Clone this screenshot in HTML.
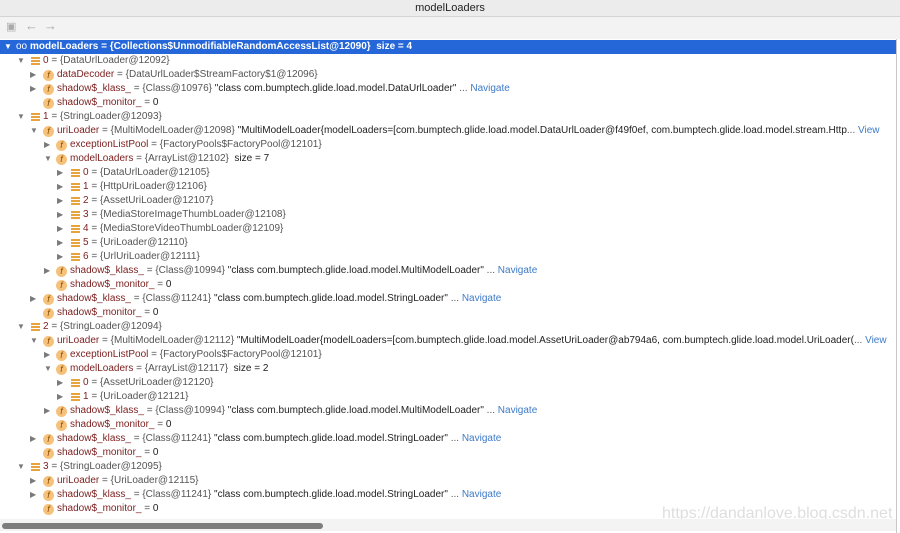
<!DOCTYPE html>
<html><head><meta charset="utf-8"><style>
*{margin:0;padding:0;box-sizing:border-box}
body{width:900px;height:533px;overflow:hidden;background:#fff;font-family:"Liberation Sans",sans-serif;font-size:10px;position:relative}
#title{position:absolute;left:0;top:0;width:900px;height:17px;background:#ececec;border-bottom:1px solid #d4d4d4;text-align:center;line-height:17px;font-size:11px;color:#222}
#tb{position:absolute;left:0;top:17px;width:900px;height:22px;background:#f3f3f3;color:#aaa;font-size:13px}
.r{position:absolute;left:0;width:896px;height:14px;line-height:14px;white-space:nowrap;color:#222;overflow:hidden}
.sel{background:#2567d8;color:#fff;font-weight:bold}
.a{position:absolute;top:0;font-size:8px;color:#7a7a7a}
.sel .a{color:#fff}
.f{position:absolute;top:2px;width:11px;height:11px;border-radius:50%;background:#f6c27b;color:#8a4d00;font-size:9px;line-height:11px;text-align:center;font-style:italic}
.l{position:absolute;top:3px;width:9px;height:8px;border-top:2px solid #e8a33d;border-bottom:2px solid #e8a33d}
.l:after{content:"";position:absolute;left:0;top:1px;width:9px;height:2px;background:#e8a33d}
.t{position:absolute;top:0}
.n{color:#7b1e1e}
.g{color:#555}
.nv{color:#3d7ac7}
#sb{position:absolute;left:0;top:519px;width:897px;height:12px;background:#f3f3f3}
#th{position:absolute;left:2px;top:523px;width:321px;height:6px;border-radius:3px;background:#7d7d7d}
#rb{position:absolute;left:896px;top:39px;width:1px;height:494px;background:#c8c8c8}
#wm{position:absolute;left:662px;top:505px;font-size:16px;color:#dedede}
</style></head><body>
<div id="title">modelLoaders</div>
<div id="tb"><span style="position:absolute;left:6px;top:3px;font-size:11px">▣</span><span style="position:absolute;left:25px;top:1px">←</span><span style="position:absolute;left:44px;top:1px">→</span></div>

<div class="r sel" style="top:40px"><span class="a" style="left:4px">▼</span><span class="t" style="left:16px;font-weight:normal">oo</span><span class="t" style="left:30px">modelLoaders = {Collections$UnmodifiableRandomAccessList@12090}&nbsp; size = 4</span></div>

<div class="r" style="top:54px"><span class="a" style="left:17px">▼</span><i class="l" style="left:31px"></i><span class="t" style="left:43px"><span class="n">0</span> <span class="g">= {DataUrlLoader@12092}</span></span></div>
<div class="r" style="top:68px"><span class="a" style="left:30px">▶</span><i class="f" style="left:43px">f</i><span class="t" style="left:57px"><span class="n">dataDecoder</span> <span class="g">= {DataUrlLoader$StreamFactory$1@12096}</span></span></div>
<div class="r" style="top:82px"><span class="a" style="left:30px">▶</span><i class="f" style="left:43px">f</i><span class="t" style="left:57px"><span class="n">shadow$_klass_</span> <span class="g">= {Class@10976}</span> "class com.bumptech.glide.load.model.DataUrlLoader" <span class="g">...</span> <span class="nv">Navigate</span></span></div>
<div class="r" style="top:96px"><i class="f" style="left:43px">f</i><span class="t" style="left:57px"><span class="n">shadow$_monitor_</span> <span class="g">=</span> 0</span></div>

<div class="r" style="top:110px"><span class="a" style="left:17px">▼</span><i class="l" style="left:31px"></i><span class="t" style="left:43px"><span class="n">1</span> <span class="g">= {StringLoader@12093}</span></span></div>
<div class="r" style="top:124px"><span class="a" style="left:30px">▼</span><i class="f" style="left:43px">f</i><span class="t" style="left:57px"><span class="n">uriLoader</span> <span class="g">= {MultiModelLoader@12098}</span> "MultiModelLoader{modelLoaders=[com.bumptech.glide.load.model.DataUrlLoader@f49f0ef, com.bumptech.glide.load.model.stream.Http<span class="g">...</span> <span class="nv">View</span></span></div>
<div class="r" style="top:138px"><span class="a" style="left:44px">▶</span><i class="f" style="left:56px">f</i><span class="t" style="left:70px"><span class="n">exceptionListPool</span> <span class="g">= {FactoryPools$FactoryPool@12101}</span></span></div>
<div class="r" style="top:152px"><span class="a" style="left:44px">▼</span><i class="f" style="left:56px">f</i><span class="t" style="left:70px"><span class="n">modelLoaders</span> <span class="g">= {ArrayList@12102}</span>&nbsp; size = 7</span></div>
<div class="r" style="top:166px"><span class="a" style="left:57px">▶</span><i class="l" style="left:71px"></i><span class="t" style="left:83px"><span class="n">0</span> <span class="g">= {DataUrlLoader@12105}</span></span></div>
<div class="r" style="top:180px"><span class="a" style="left:57px">▶</span><i class="l" style="left:71px"></i><span class="t" style="left:83px"><span class="n">1</span> <span class="g">= {HttpUriLoader@12106}</span></span></div>
<div class="r" style="top:194px"><span class="a" style="left:57px">▶</span><i class="l" style="left:71px"></i><span class="t" style="left:83px"><span class="n">2</span> <span class="g">= {AssetUriLoader@12107}</span></span></div>
<div class="r" style="top:208px"><span class="a" style="left:57px">▶</span><i class="l" style="left:71px"></i><span class="t" style="left:83px"><span class="n">3</span> <span class="g">= {MediaStoreImageThumbLoader@12108}</span></span></div>
<div class="r" style="top:222px"><span class="a" style="left:57px">▶</span><i class="l" style="left:71px"></i><span class="t" style="left:83px"><span class="n">4</span> <span class="g">= {MediaStoreVideoThumbLoader@12109}</span></span></div>
<div class="r" style="top:236px"><span class="a" style="left:57px">▶</span><i class="l" style="left:71px"></i><span class="t" style="left:83px"><span class="n">5</span> <span class="g">= {UriLoader@12110}</span></span></div>
<div class="r" style="top:250px"><span class="a" style="left:57px">▶</span><i class="l" style="left:71px"></i><span class="t" style="left:83px"><span class="n">6</span> <span class="g">= {UrlUriLoader@12111}</span></span></div>
<div class="r" style="top:264px"><span class="a" style="left:44px">▶</span><i class="f" style="left:56px">f</i><span class="t" style="left:70px"><span class="n">shadow$_klass_</span> <span class="g">= {Class@10994}</span> "class com.bumptech.glide.load.model.MultiModelLoader" <span class="g">...</span> <span class="nv">Navigate</span></span></div>
<div class="r" style="top:278px"><i class="f" style="left:56px">f</i><span class="t" style="left:70px"><span class="n">shadow$_monitor_</span> <span class="g">=</span> 0</span></div>
<div class="r" style="top:292px"><span class="a" style="left:30px">▶</span><i class="f" style="left:43px">f</i><span class="t" style="left:57px"><span class="n">shadow$_klass_</span> <span class="g">= {Class@11241}</span> "class com.bumptech.glide.load.model.StringLoader" <span class="g">...</span> <span class="nv">Navigate</span></span></div>
<div class="r" style="top:306px"><i class="f" style="left:43px">f</i><span class="t" style="left:57px"><span class="n">shadow$_monitor_</span> <span class="g">=</span> 0</span></div>

<div class="r" style="top:320px"><span class="a" style="left:17px">▼</span><i class="l" style="left:31px"></i><span class="t" style="left:43px"><span class="n">2</span> <span class="g">= {StringLoader@12094}</span></span></div>
<div class="r" style="top:334px"><span class="a" style="left:30px">▼</span><i class="f" style="left:43px">f</i><span class="t" style="left:57px"><span class="n">uriLoader</span> <span class="g">= {MultiModelLoader@12112}</span> "MultiModelLoader{modelLoaders=[com.bumptech.glide.load.model.AssetUriLoader@ab794a6, com.bumptech.glide.load.model.UriLoader(<span class="g">...</span> <span class="nv">View</span></span></div>
<div class="r" style="top:348px"><span class="a" style="left:44px">▶</span><i class="f" style="left:56px">f</i><span class="t" style="left:70px"><span class="n">exceptionListPool</span> <span class="g">= {FactoryPools$FactoryPool@12101}</span></span></div>
<div class="r" style="top:362px"><span class="a" style="left:44px">▼</span><i class="f" style="left:56px">f</i><span class="t" style="left:70px"><span class="n">modelLoaders</span> <span class="g">= {ArrayList@12117}</span>&nbsp; size = 2</span></div>
<div class="r" style="top:376px"><span class="a" style="left:57px">▶</span><i class="l" style="left:71px"></i><span class="t" style="left:83px"><span class="n">0</span> <span class="g">= {AssetUriLoader@12120}</span></span></div>
<div class="r" style="top:390px"><span class="a" style="left:57px">▶</span><i class="l" style="left:71px"></i><span class="t" style="left:83px"><span class="n">1</span> <span class="g">= {UriLoader@12121}</span></span></div>
<div class="r" style="top:404px"><span class="a" style="left:44px">▶</span><i class="f" style="left:56px">f</i><span class="t" style="left:70px"><span class="n">shadow$_klass_</span> <span class="g">= {Class@10994}</span> "class com.bumptech.glide.load.model.MultiModelLoader" <span class="g">...</span> <span class="nv">Navigate</span></span></div>
<div class="r" style="top:418px"><i class="f" style="left:56px">f</i><span class="t" style="left:70px"><span class="n">shadow$_monitor_</span> <span class="g">=</span> 0</span></div>
<div class="r" style="top:432px"><span class="a" style="left:30px">▶</span><i class="f" style="left:43px">f</i><span class="t" style="left:57px"><span class="n">shadow$_klass_</span> <span class="g">= {Class@11241}</span> "class com.bumptech.glide.load.model.StringLoader" <span class="g">...</span> <span class="nv">Navigate</span></span></div>
<div class="r" style="top:446px"><i class="f" style="left:43px">f</i><span class="t" style="left:57px"><span class="n">shadow$_monitor_</span> <span class="g">=</span> 0</span></div>

<div class="r" style="top:460px"><span class="a" style="left:17px">▼</span><i class="l" style="left:31px"></i><span class="t" style="left:43px"><span class="n">3</span> <span class="g">= {StringLoader@12095}</span></span></div>
<div class="r" style="top:474px"><span class="a" style="left:30px">▶</span><i class="f" style="left:43px">f</i><span class="t" style="left:57px"><span class="n">uriLoader</span> <span class="g">= {UriLoader@12115}</span></span></div>
<div class="r" style="top:488px"><span class="a" style="left:30px">▶</span><i class="f" style="left:43px">f</i><span class="t" style="left:57px"><span class="n">shadow$_klass_</span> <span class="g">= {Class@11241}</span> "class com.bumptech.glide.load.model.StringLoader" <span class="g">...</span> <span class="nv">Navigate</span></span></div>
<div class="r" style="top:502px"><i class="f" style="left:43px">f</i><span class="t" style="left:57px"><span class="n">shadow$_monitor_</span> <span class="g">=</span> 0</span></div>

<div id="wm">https://dandanlove.blog.csdn.net</div>
<div id="sb"></div><div id="th"></div>
<div id="rb"></div>
</body></html>
